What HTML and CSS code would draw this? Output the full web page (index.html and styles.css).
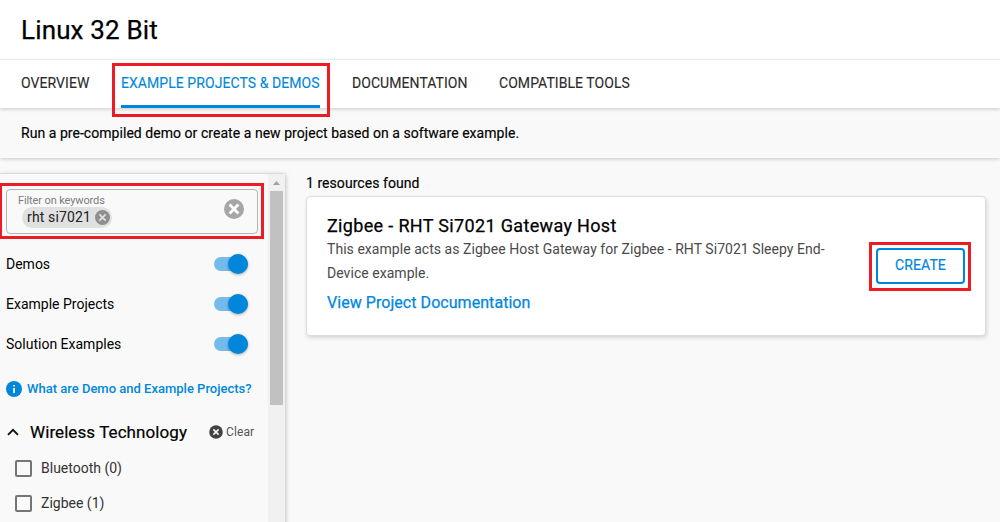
FILE: index.html
```html
<!DOCTYPE html>
<html lang="en">
<head>
<meta charset="utf-8">
<title>Linux 32 Bit</title>
<link rel="stylesheet" href="styles.css">
</head>
<body>
<header class="title-bar"><h1><span>Linux 32 Bit</span></h1></header>
<nav class="tabs">
  <a class="tab t-overview"><span>OVERVIEW</span></a>
  <a class="tab t-examples active"><span>EXAMPLE PROJECTS &amp; DEMOS</span><i class="mark mark-tab"></i></a>
  <a class="tab t-docs"><span>DOCUMENTATION</span></a>
  <a class="tab t-tools"><span>COMPATIBLE TOOLS</span></a>
</nav>
<div class="intro"><span>Run a pre-compiled demo or create a new project based on a software example.</span></div>
<main class="content">
  <aside class="sidebar">
    <div class="filters">
      <div class="field">
        <div class="field-main">
          <label><span>Filter on keywords</span></label>
          <div class="chip"><span>rht si7021</span>
            <svg width="15" height="15" viewBox="0 0 24 24"><circle cx="12" cy="12" r="12" fill="#8f8f8f"/><path d="M7 7l10 10M17 7L7 17" stroke="#e0e0e0" stroke-width="2.8"/></svg>
          </div>
        </div>
        <svg width="20" height="20" viewBox="0 0 20 20"><circle cx="10" cy="10" r="10" fill="#a6a6a6"/><path d="M5.6 5.6l8.8 8.8M14.4 5.6l-8.8 8.8" stroke="#fff" stroke-width="2.8"/></svg>
        <i class="mark mark-field"></i>
      </div>
      <div class="switch-row"><span class="s1">Demos</span><i class="switch"></i></div>
      <div class="switch-row"><span class="s2">Example Projects</span><i class="switch"></i></div>
      <div class="switch-row"><span class="s3">Solution Examples</span><i class="switch"></i></div>
      <a class="help"><svg width="16" height="16" viewBox="0 0 16 16"><circle cx="8" cy="8" r="8" fill="#0087dc"/><path d="M7.2 3.9h1.7v1.7H7.2zM7.2 7h1.7v5H7.2z" fill="#fff"/></svg><span>What are Demo and Example Projects?</span></a>
      <div class="group">
        <svg width="12" height="8" viewBox="0 0 12 8"><path d="M1 6.8L6 1.8l5 5" fill="none" stroke="#111" stroke-width="1.9"/></svg>
        <h2><span>Wireless Technology</span></h2>
        <a class="clear"><svg width="14" height="14" viewBox="0 0 14 14"><circle cx="7" cy="7" r="6.8" fill="#424242"/><path d="M4.4 4.4l5.2 5.2M9.6 4.4L4.4 9.6" stroke="#fff" stroke-width="1.5"/></svg><span>Clear</span></a>
      </div>
      <div class="check"><i></i><span class="c1">Bluetooth (0)</span></div>
      <div class="check"><i></i><span class="c2">Zigbee (1)</span></div>
    </div>
    <div class="scrollbar"><svg width="7" height="4" viewBox="0 0 7 4"><path d="M0 4L3.5 0 7 4z" fill="#a0a0a0"/></svg><i></i></div>
  </aside>
  <section class="results">
    <p class="count"><span>1 resources found</span></p>
    <article class="card">
      <div class="card-text">
        <h3><span>Zigbee - RHT Si7021 Gateway Host</span></h3>
        <p><span class="d1">This example acts as Zigbee Host Gateway for Zigbee - RHT Si7021 Sleepy End-</span><br><span class="d2">Device example.</span></p>
        <a><span>View Project Documentation</span></a>
      </div>
      <button class="create"><span>CREATE</span><i class="mark mark-create"></i></button>
    </article>
  </section>
</main>
</body>
</html>
```
FILE: styles.css
```css
* { box-sizing: border-box; }
body {
  margin: 0;
  width: 1000px;
  height: 522px;
  overflow: hidden;
  display: flex;
  flex-direction: column;
  background: #f9f9f9;
  color: #000;
  font: 14px/20px Roboto, "Liberation Sans", sans-serif;
  white-space: nowrap;
}
h1, h2, h3, p { margin: 0; font-weight: 400; }
svg { display: block; flex: none; }
.title-bar { height: 60px; padding: 14px 21px 0; background: #fff; border-bottom: 1px solid #f7f7f7; }
h1 { font-size: 26px; line-height: 32px; letter-spacing: .15px; -webkit-text-stroke: .25px; }
.tabs {
  position: relative;
  z-index: 2;
  display: flex;
  gap: 32px;
  height: 48px;
  padding-left: 21px;
  background: #fff;
  box-shadow: 0 1px 4px rgba(0, 0, 0, .2);
}
.tab { position: relative; height: 48px; padding-top: 13px; color: #2b2b2b; letter-spacing: .06px; -webkit-text-stroke: .12px; }
.t-overview { width: 68px; }
.t-examples { width: 199px; }
.t-docs { width: 115px; }
.active { color: #0087dc; border-bottom: 3px solid #0087dc; }
.mark { position: absolute; border: 3px solid #ed1c24; pointer-events: none; }
.mark-tab { left: -9px; top: 3px; width: 218px; height: 54px; }
.intro { position: relative; height: 50px; padding: 15px 21px 0; letter-spacing: .045px; -webkit-text-stroke: .15px; box-shadow: 0 1px 4px rgba(0, 0, 0, .2); }
.content { display: flex; flex: 1; padding-top: 15px; min-height: 0; }
.sidebar {
  display: flex;
  width: 285px;
  height: 360px;
  border-top: 1px solid #dcdcdc;
  border-radius: 0 3px 0 0;
  box-shadow: 1px 1px 4px rgba(0, 0, 0, .22);
}
.filters { width: 268px; padding: 15px 10px 0 6px; }
.field {
  position: relative;
  display: flex;
  align-items: flex-start;
  justify-content: space-between;
  width: 252px;
  height: 45px;
  margin-bottom: 10px;
  padding: 9px 13px 0 11px;
  border: 1px solid #b3b3b3;
  border-radius: 4px;
}
.field-main { margin-top: -5px; }
.field label { display: block; height: 13px; font-size: 11px; line-height: 13px; letter-spacing: -.12px; color: #7c7c7c; }
.chip {
  display: flex;
  align-items: center;
  justify-content: space-between;
  width: 90px;
  height: 21px;
  margin-left: 4px;
  padding: 0 2px 0 5px;
  border-radius: 11px;
  background: #e0e0e0;
  color: #222;
}
.chip span { margin-top: -1px; letter-spacing: .15px; }
.mark-field { left: -7px; top: -7px; width: 264px; height: 56px; border-left-width: 2px; }
.switch-row { display: flex; align-items: center; justify-content: space-between; width: 242px; height: 40px; }
.switch { display: flex; align-items: center; justify-content: flex-end; width: 34px; height: 14px; border-radius: 7px; background: #73bbea; }
.switch::after { content: ""; flex: none; width: 20px; height: 20px; border-radius: 50%; background: #0087dc; box-shadow: 0 1px 3px rgba(0, 0, 0, .3); }
.help { display: flex; align-items: center; gap: 5px; height: 49px; color: #0087dc; font-size: 13px; font-weight: 500; }
.group { display: flex; align-items: center; height: 38px; padding-left: 1px; }
h2 { width: 190px; padding-left: 11px; font-size: 17px; letter-spacing: .08px; -webkit-text-stroke: .2px; }
.clear { display: flex; align-items: center; gap: 3px; color: #555; font-size: 12px; letter-spacing: .1px; }
.check { display: flex; align-items: center; gap: 9px; height: 35px; padding-left: 9px; color: #333; }
.check span { margin-top: -1px; }
.check i { width: 17px; height: 17px; border: 2px solid #757575; border-radius: 2px; }
.scrollbar { display: flex; flex-direction: column; align-items: center; width: 17px; padding: 7px 0 0; background: #f1f1f1; }
.scrollbar i { width: 13px; height: 214px; margin-top: 6px; background: #c1c1c1; }
.results { width: 680px; margin-left: 21px; }
.count { height: 23px; letter-spacing: .05px; -webkit-text-stroke: .15px; }
.card {
  display: flex;
  justify-content: space-between;
  height: 140px;
  padding: 18px 20px 0;
  border: 1px solid #dcdcdc;
  border-radius: 4px;
  background: #fff;
  box-shadow: 1px 2px 4px rgba(0, 0, 0, .14);
}
h3 { font-size: 18px; line-height: 22px; letter-spacing: .34px; -webkit-text-stroke: .25px; }
.card p { line-height: 24px; letter-spacing: .045px; color: #4a4a4a; }
.card a { display: block; margin-top: 8px; color: #0087dc; font-size: 16px; letter-spacing: .05px; -webkit-text-stroke: .25px; line-height: 20px; }
.create {
  position: relative;
  width: 89px;
  height: 36px;
  margin-top: 33px;
  padding: 0 0 2px;
  border: 2px solid #0087dc;
  border-radius: 4px;
  background: #fff;
  color: #0087dc;
  font: 400 14px/30px Roboto, sans-serif;
  letter-spacing: .1px;
  -webkit-text-stroke: .2px;
}
.mark-create { left: -9px; top: -8px; width: 102px; height: 49px; }
```
